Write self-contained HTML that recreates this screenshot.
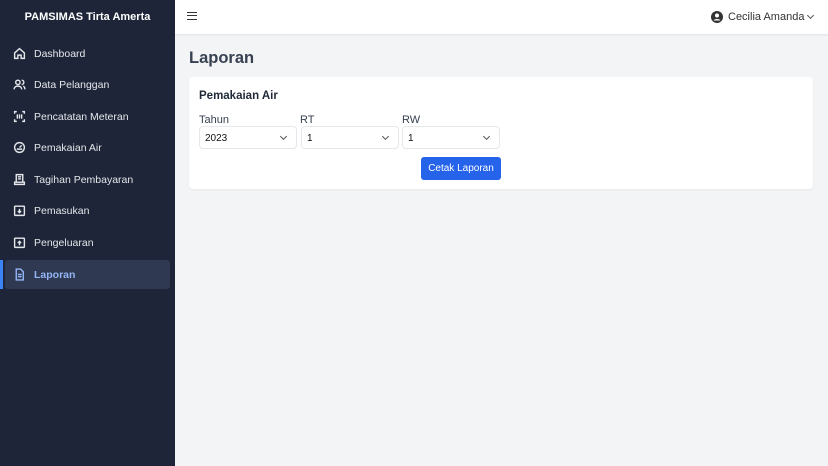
<!DOCTYPE html>
<html><head><style>
*{box-sizing:border-box;margin:0;padding:0}
body{width:828px;height:466px;overflow:hidden;font-family:"Liberation Sans",sans-serif;background:#f3f4f6;position:relative}
.sb{position:absolute;left:0;top:0;width:175px;height:466px;background:#1e2538;color:#e5e7eb}
.brand{position:absolute;top:11px;left:0;width:175px;text-align:center;font-weight:bold;font-size:11px;color:#fff}
.item{position:absolute;left:5px;width:165px;height:29px;display:flex;align-items:center;font-size:10.5px;color:#e5e7eb}
.item svg{position:absolute;left:8px;width:13px;height:13px}
.item span{position:absolute;left:29px}
.act{background:#2f3a52;border-radius:3px;color:#93b4f5}
.bar{position:absolute;left:0;top:260px;width:3px;height:29px;background:#3b82f6}
.hdr{position:absolute;left:175px;top:0;right:0;height:34px;background:#fff;box-shadow:0 1px 2px rgba(0,0,0,.08)}
h1{position:absolute;left:189px;top:49px;font-size:16.5px;color:#374151;font-weight:bold}
.card{position:absolute;left:189px;top:77px;width:624px;height:112px;background:#fff;border-radius:4px;box-shadow:0 1px 2px rgba(0,0,0,.05)}
.t{position:absolute;font-size:11.5px;color:#1f2937}
.lbl{position:absolute;font-size:11px;color:#374151;top:114px}
.sel{position:absolute;top:126px;height:23px;width:98px;border:1px solid #e5e7eb;border-radius:4px;background:#fff;font-size:10px;color:#111;padding:6px 0 0 5px}
.sel:after{content:"";position:absolute;right:10px;top:7px;width:4px;height:4px;border-right:1px solid #555;border-bottom:1px solid #555;transform:rotate(45deg)}
.btn{position:absolute;left:421px;top:157px;width:80px;height:23px;background:#2563eb;color:#fff;border-radius:3px;font-size:10px;text-align:center;line-height:23px}
</style></head><body>
<div class="sb">
<div class="brand">PAMSIMAS Tirta Amerta</div>
<div class="item" style="top:39px"><svg viewBox="0 0 24 24" fill="none" stroke="#e5e7eb" stroke-width="2.6"><path d="M3 11l9-8 9 8v10h-6v-6H9v6H3z"/></svg><span>Dashboard</span></div>
<div class="item" style="top:70px"><svg viewBox="0 0 24 24" fill="none" stroke="#e5e7eb" stroke-width="2.6"><circle cx="9" cy="8" r="4"/><path d="M2 21c0-4 3-6 7-6s7 2 7 6M16 4a4 4 0 010 8M19 15c2 1 3 3 3 6"/></svg><span>Data Pelanggan</span></div>
<div class="item" style="top:102px"><svg viewBox="0 0 24 24" fill="none" stroke="#e5e7eb" stroke-width="2.6"><path d="M3 7V3h4M17 3h4v4M21 17v4h-4M7 21H3v-4M8 8v8M12 8v8M16 8v8"/></svg><span>Pencatatan Meteran</span></div>
<div class="item" style="top:133px"><svg viewBox="0 0 24 24" fill="none" stroke="#e5e7eb" stroke-width="2.6"><circle cx="12" cy="12" r="9"/><path d="M12 12l4-4M7 15h10"/></svg><span>Pemakaian Air</span></div>
<div class="item" style="top:165px"><svg viewBox="0 0 24 24" fill="none" stroke="#e5e7eb" stroke-width="2.6"><path d="M6 3h12v14H6zM3 17h18v4H3zM9 7h6M9 11h6"/></svg><span>Tagihan Pembayaran</span></div>
<div class="item" style="top:196px"><svg viewBox="0 0 24 24" fill="none" stroke="#e5e7eb" stroke-width="2.6"><rect x="3" y="4" width="18" height="17" rx="1"/><path d="M12 9v7M9 13l3 3 3-3"/></svg><span>Pemasukan</span></div>
<div class="item" style="top:228px"><svg viewBox="0 0 24 24" fill="none" stroke="#e5e7eb" stroke-width="2.6"><rect x="3" y="4" width="18" height="17" rx="1"/><path d="M12 17v-7M9 13l3-3 3 3"/></svg><span>Pengeluaran</span></div>
<div class="item act" style="top:260px"><svg viewBox="0 0 24 24" fill="none" stroke="#93b4f5" stroke-width="2.6"><path d="M6 2h8l5 5v15H6zM9 12h7M9 16h7"/></svg><span style="font-weight:bold">Laporan</span></div>
<div class="bar"></div>
</div>
<div class="hdr">
<div style="position:absolute;left:12px;top:12px;width:10px;height:8px;border-top:1.5px solid #333;border-bottom:1.5px solid #333"><div style="margin-top:2px;border-top:1.5px solid #333"></div></div>
<svg style="position:absolute;left:536px;top:11px" width="12" height="12" viewBox="0 0 24 24"><circle cx="12" cy="12" r="12" fill="#333"/><circle cx="12" cy="9" r="4" fill="#fff"/><path d="M5 19c2-4 12-4 14 0" fill="#fff"/></svg>
<div style="position:absolute;left:553px;top:11px;font-size:11px;color:#333">Cecilia Amanda</div>
<div style="position:absolute;left:633px;top:13px;width:5px;height:5px;border-right:1px solid #555;border-bottom:1px solid #555;transform:rotate(45deg)"></div>
</div>
<h1>Laporan</h1>
<div class="card"></div>
<div class="t" style="left:199px;top:90px;font-weight:bold">Pemakaian Air</div>
<div class="lbl" style="left:199px">Tahun</div>
<div class="lbl" style="left:300px">RT</div>
<div class="lbl" style="left:402px">RW</div>
<div class="sel" style="left:199px">2023</div>
<div class="sel" style="left:301px">1</div>
<div class="sel" style="left:402px">1</div>
<div class="btn">Cetak Laporan</div>
</body></html>
